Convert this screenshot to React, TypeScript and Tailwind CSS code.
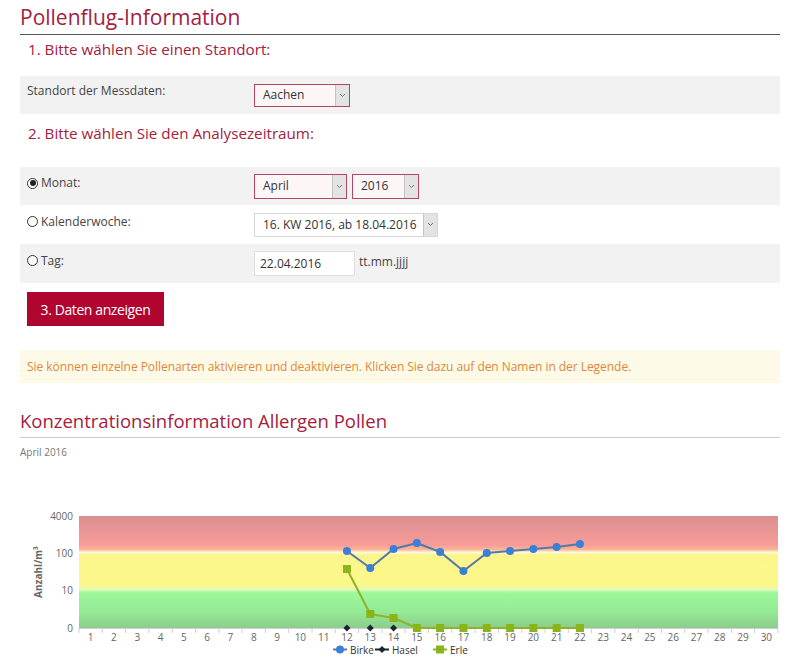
import React from "react";

type SelectProps = {
  value: string;
  width: string;
  height: string;
  red?: boolean;
};

const SelectBox = ({ value, width, height, red }: SelectProps) => (
  <div
    className={`flex items-stretch border ${
      red ? "border-[#b3475f] bg-[#fdf6f7]" : "border-[#d6d6d6] bg-white"
    } ${width} ${height}`}
  >
    <span className="flex flex-1 items-center whitespace-nowrap pl-[8px] text-[12px] text-[#333]">
      {value}
    </span>
    <span className="flex w-[14px] items-center justify-center border-l border-[#c4c4c4] bg-[#e3e3e3]">
      <svg width="7" height="5" viewBox="0 0 7 5">
        <path d="M1 1l2.5 2.5L6 1" fill="none" stroke="#777" strokeWidth="1" />
      </svg>
    </span>
  </div>
);

const Radio = ({ checked }: { checked?: boolean }) => (
  <span className="mr-[3px] flex h-[11px] w-[11px] items-center justify-center rounded-full border border-[#333] bg-white">
    {checked && <span className="h-[6px] w-[6px] rounded-full bg-[#222]" />}
  </span>
);

const birke = [51, 68, 49, 43, 52, 71, 53, 51, 49, 47, 44];
const erle = [69, 114, 118, 128, 128, 128, 128, 128, 128, 128, 128];
const dayX = (d: number) => 59 + (d - 0.5) * 23.3;

const Chart = () => {
  const days = Array.from({ length: 30 }, (_, i) => i + 1);
  const birkePts = birke.map((y, i) => `${dayX(12 + i)},${y}`).join(" ");
  const erlePts = erle.map((y, i) => `${dayX(12 + i)},${y}`).join(" ");
  return (
    <svg width="760" height="160" viewBox="0 0 760 160" className="mt-[41px] block">
      <defs>
        <linearGradient id="bands" x1="0" y1="0" x2="0" y2="1">
          <stop offset="0" stopColor="#d98f8f" />
          <stop offset="0.26" stopColor="#f89c98" />
          <stop offset="0.3" stopColor="#fbb892" />
          <stop offset="0.325" stopColor="#fffbe4" />
          <stop offset="0.345" stopColor="#fdf58c" />
          <stop offset="0.62" stopColor="#fbf88a" />
          <stop offset="0.655" stopColor="#e6fbb8" />
          <stop offset="0.685" stopColor="#9cf89a" />
          <stop offset="0.85" stopColor="#95ea95" />
          <stop offset="1" stopColor="#8ccd8c" />
        </linearGradient>
      </defs>
      <rect x="59" y="16" width="699" height="112" fill="url(#bands)" />
      {[
        ["4000", 16],
        ["100", 53],
        ["10", 90],
        ["0", 128],
      ].map(([t, y]) => (
        <text
          key={t}
          x="53"
          y={Number(y) + 3.5}
          textAnchor="end"
          fontSize="10"
          fill="#666"
          fontFamily="Open Sans, sans-serif"
        >
          {t}
        </text>
      ))}
      <text
        transform="translate(22,72) rotate(-90)"
        textAnchor="middle"
        fontSize="10"
        fontWeight="bold"
        fill="#666"
        fontFamily="Open Sans, sans-serif"
      >
        Anzahl/m³
      </text>
      <line x1="59" y1="128.5" x2="758" y2="128.5" stroke="#cfcfcf" />
      {Array.from({ length: 31 }, (_, i) => (
        <line
          key={i}
          x1={59 + i * 23.3}
          y1="128"
          x2={59 + i * 23.3}
          y2="133"
          stroke="#cfcfcf"
        />
      ))}
      {days.map((d) => (
        <text
          key={d}
          x={dayX(d)}
          y="140.5"
          textAnchor="middle"
          fontSize="10"
          fill="#666"
          fontFamily="Open Sans, sans-serif"
        >
          {d}
        </text>
      ))}
      <polyline points={erlePts} fill="none" stroke="#8db32a" strokeWidth="2" />
      {erle.map((y, i) => (
        <rect key={i} x={dayX(12 + i) - 4} y={y - 4} width="8" height="8" fill="#8ab51a" />
      ))}
      {[12, 13, 14].map((d) => (
        <path
          key={d}
          d={`M${dayX(d)} 124.5l3.5 3.5-3.5 3.5-3.5-3.5z`}
          fill="#1a2530"
        />
      ))}
      <polyline points={birkePts} fill="none" stroke="#5579a8" strokeWidth="2" />
      {birke.map((y, i) => (
        <circle key={i} cx={dayX(12 + i)} cy={y} r="4" fill="#3b80d6" />
      ))}
      <g fontSize="10" fill="#333" fontFamily="Open Sans, sans-serif">
        <line x1="313" y1="149.5" x2="327" y2="149.5" stroke="#5579a8" strokeWidth="2" />
        <circle cx="320" cy="149.5" r="4" fill="#3b80d6" />
        <text x="330" y="153.5">Birke</text>
        <line x1="355" y1="149.5" x2="369" y2="149.5" stroke="#1a2530" strokeWidth="2" />
        <path d="M362 146l3.5 3.5-3.5 3.5-3.5-3.5z" fill="#1a2530" />
        <text x="372" y="153.5">Hasel</text>
        <line x1="413" y1="149.5" x2="427" y2="149.5" stroke="#8db32a" strokeWidth="2" />
        <rect x="416" y="145.5" width="8" height="8" fill="#8ab51a" />
        <text x="430" y="153.5">Erle</text>
      </g>
    </svg>
  );
};

export default function App() {
  return (
    <div className="h-[672px] w-[800px] overflow-hidden bg-white px-5 font-['Open_Sans',sans-serif]">
      <h1 className="border-b border-[#555] pb-[2px] pt-[3px] text-[21px] leading-[29px] text-[#a3213d]">
        Pollenflug-Information
      </h1>
      <h2 className="mt-[3px] pl-2 text-[15.2px] leading-[22px] text-[#a3213d]">
        1. Bitte wählen Sie einen Standort:
      </h2>
      <div className="mt-[16px] flex h-[38px] items-center bg-[#f2f2f2]">
        <div className="w-[234px] pl-[7px] text-[12px] text-[#444] -mt-[8px]">
          Standort der Messdaten:
        </div>
        <SelectBox value="Aachen" width="w-[96px]" height="h-[23px]" red />
      </div>
      <h2 className="mt-[8px] pl-2 text-[15.2px] leading-[22px] text-[#a3213d]">
        2. Bitte wählen Sie den Analysezeitraum:
      </h2>
      <div className="mt-[23px] flex h-[38px] items-center bg-[#f2f2f2]">
        <label className="flex w-[234px] items-center pl-[7px] text-[12px] text-[#444] -mt-[6px]">
          <Radio checked />
          Monat:
        </label>
        <div className="flex gap-[5px]">
          <SelectBox value="April" width="w-[93px]" height="h-[25px]" red />
          <SelectBox value="2016" width="w-[67px]" height="h-[25px]" red />
        </div>
      </div>
      <div className="flex h-[39px] items-center bg-white">
        <label className="flex w-[234px] items-center pl-[7px] text-[12px] text-[#444] -mt-[6px]">
          <Radio />
          Kalenderwoche:
        </label>
        <SelectBox value="16. KW 2016, ab 18.04.2016" width="w-[184px]" height="h-[24px]" />
      </div>
      <div className="flex h-[39px] items-center bg-[#f2f2f2]">
        <label className="flex w-[234px] items-center pl-[7px] text-[12px] text-[#444] -mt-[6px]">
          <Radio />
          Tag:
        </label>
        <div className="flex h-[25px] w-[101px] items-center border border-[#dedede] bg-white pl-[5px] text-[12px] text-[#333]">
          22.04.2016
        </div>
        <span className="ml-[4px] -mt-[4px] text-[12px] text-[#444]">tt.mm.jjjj</span>
      </div>
      <button className="ml-[7px] mt-[9px] flex h-[34px] w-[137px] items-center justify-center bg-[#b0052f] text-[14px] tracking-[-0.4px] text-white">
        3. Daten anzeigen
      </button>
      <div className="mt-[24px] flex h-[33px] items-center bg-[#fdfbe8] pl-[7px] text-[12px] tracking-[-0.05px] text-[#e0873a]">
        Sie können einzelne Pollenarten aktivieren und deaktivieren. Klicken Sie dazu auf den Namen in der Legende.
      </div>
      <h3 className="mt-[26px] border-b border-[#cccccc] pb-[4px] text-[18.5px] leading-[24px] text-[#a3213d]">
        Konzentrationsinformation Allergen Pollen
      </h3>
      <div className="mt-[7px] text-[10px] leading-[14px] text-[#777]">April 2016</div>
      <Chart />
    </div>
  );
}
